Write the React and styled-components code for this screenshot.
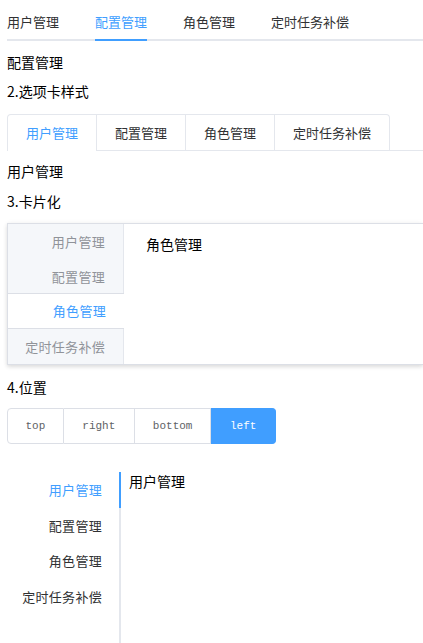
import React, { useState } from "react";
import styled, { createGlobalStyle, css } from "styled-components";

const Global = createGlobalStyle`
  body {
    margin: 0;
    font-family: "Noto Sans CJK SC", "Liberation Sans", sans-serif;
    color: #000;
    background: #fff;
  }
`;

const Page = styled.div`
  padding: 4px 0 0 7px;
  overflow: hidden;
  font-size: 13px;
`;

const Line = styled.div`
  font-size: 14px;
  line-height: 20px;
  color: #000;
  margin-top: ${(p) => p.top || 0}px;
`;

/* 1. plain tabs */
const TopNav = styled.div`
  display: flex;
  height: 35px;
  border-bottom: 2px solid #e4e7ed;
`;

const TopItem = styled.div`
  position: relative;
  padding: 0 18px;
  line-height: 35px;
  color: #303133;
  &:first-child {
    padding-left: 0;
  }
  ${(p) =>
    p.active &&
    css`
      color: #409eff;
      &::after {
        content: "";
        position: absolute;
        left: 18px;
        right: 18px;
        bottom: -2px;
        height: 2px;
        background: #409eff;
      }
    `}
`;

/* 2. card tabs */
const CardHeader = styled.div`
  display: flex;
  border-bottom: 1px solid #e4e7ed;
  margin-top: 13px;
`;

const CardNav = styled.div`
  display: flex;
  border: 1px solid #e4e7ed;
  border-bottom: none;
  border-radius: 4px 4px 0 0;
  margin-bottom: -1px;
`;

const CardItem = styled.div`
  padding: 0 18px;
  height: 35px;
  line-height: 35px;
  color: #303133;
  border-left: 1px solid #e4e7ed;
  border-bottom: 1px solid transparent;
  &:first-child {
    border-left: none;
  }
  ${(p) =>
    p.active &&
    css`
      color: #409eff;
      border-bottom-color: #fff;
    `}
`;

/* 3. border card */
const BorderCard = styled.div`
  display: flex;
  margin-top: 12px;
  height: 140px;
  border: 1px solid #dcdfe6;
  border-right: none;
  box-shadow: 0 2px 4px rgba(0, 0, 0, 0.12), 0 0 6px rgba(0, 0, 0, 0.04);
`;

const SideHeader = styled.div`
  width: 115px;
  background: #f5f7fa;
  border-right: 1px solid #e4e7ed;
  display: flex;
  flex-direction: column;
`;

const SideItem = styled.div`
  height: 35px;
  line-height: 35px;
  text-align: right;
  padding-right: 18px;
  color: #909399;
  letter-spacing: 0.3px;
  ${(p) =>
    p.active &&
    css`
      color: #409eff;
      background: #fff;
      border-top: 1px solid #dcdfe6;
      border-bottom: 1px solid #dcdfe6;
      margin: -1px -1px 0 0;
      line-height: 33px;
    `}
`;

const CardBody = styled.div`
  flex: 1;
  padding: 10px 0 0 22px;
  font-size: 14px;
  line-height: 20px;
`;

/* 4. position radios */
const RadioGroup = styled.div`
  display: flex;
  margin-top: 11px;
`;

const RadioButton = styled.div`
  height: 34px;
  line-height: 34px;
  padding: 0 ${(p) => p.pad}px;
  font-family: "Liberation Mono", monospace;
  font-size: 11px;
  color: #606266;
  border: 1px solid #dcdfe6;
  border-left: none;
  &:first-child {
    border-left: 1px solid #dcdfe6;
    border-radius: 4px 0 0 4px;
  }
  &:last-child {
    border-radius: 0 4px 4px 0;
  }
  ${(p) =>
    p.active &&
    css`
      background: #409eff;
      border-color: #409eff;
      color: #fff;
    `}
`;

/* 5. left tabs */
const LeftTabs = styled.div`
  display: flex;
  margin-top: 28px;
  height: 180px;
`;

const LeftNav = styled.div`
  width: 112px;
  border-right: 2px solid #e4e7ed;
`;

const LeftItem = styled.div`
  height: 35.5px;
  line-height: 35.5px;
  text-align: right;
  padding-right: 17px;
  color: ${(p) => (p.active ? "#409eff" : "#303133")};
  letter-spacing: 0.3px;
  position: relative;
  ${(p) =>
    p.active &&
    css`
      &::after {
        content: "";
        position: absolute;
        right: -2px;
        top: 0;
        width: 2px;
        height: 36px;
        background: #409eff;
      }
    `}
`;

const LeftBody = styled.div`
  padding-left: 8px;
  font-size: 14px;
  line-height: 18px;
`;

const names = ["用户管理", "配置管理", "角色管理", "定时任务补偿"];

export default function App() {
  const [top, setTop] = useState(1);
  const [card, setCard] = useState(0);
  const [side, setSide] = useState(2);
  const [pos, setPos] = useState("left");
  const [left, setLeft] = useState(0);

  const radios = [
    ["top", 17.5],
    ["right", 18.5],
    ["bottom", 18],
    ["left", 18.5],
  ];

  return (
    <Page>
      <Global />
      <TopNav>
        {names.map((n, i) => (
          <TopItem key={n} active={i === top} onClick={() => setTop(i)}>
            {n}
          </TopItem>
        ))}
      </TopNav>
      <Line top={11}>{names[top]}</Line>
      <Line top={9}>2.选项卡样式</Line>

      <CardHeader>
        <CardNav>
          {names.map((n, i) => (
            <CardItem key={n} active={i === card} onClick={() => setCard(i)}>
              {n}
            </CardItem>
          ))}
        </CardNav>
      </CardHeader>
      <Line top={10}>{names[card]}</Line>
      <Line top={10}>3.卡片化</Line>

      <BorderCard>
        <SideHeader>
          {names.map((n, i) => (
            <SideItem key={n} active={i === side} onClick={() => setSide(i)}>
              {n}
            </SideItem>
          ))}
        </SideHeader>
        <CardBody>{names[side]}</CardBody>
      </BorderCard>

      <Line top={12}>4.位置</Line>
      <RadioGroup>
        {radios.map(([r, pad]) => (
          <RadioButton key={r} pad={pad} active={r === pos} onClick={() => setPos(r)}>
            {r}
          </RadioButton>
        ))}
      </RadioGroup>

      <LeftTabs>
        <LeftNav>
          {names.map((n, i) => (
            <LeftItem key={n} active={i === left} onClick={() => setLeft(i)}>
              {n}
            </LeftItem>
          ))}
        </LeftNav>
        <LeftBody>{names[left]}</LeftBody>
      </LeftTabs>
    </Page>
  );
}
